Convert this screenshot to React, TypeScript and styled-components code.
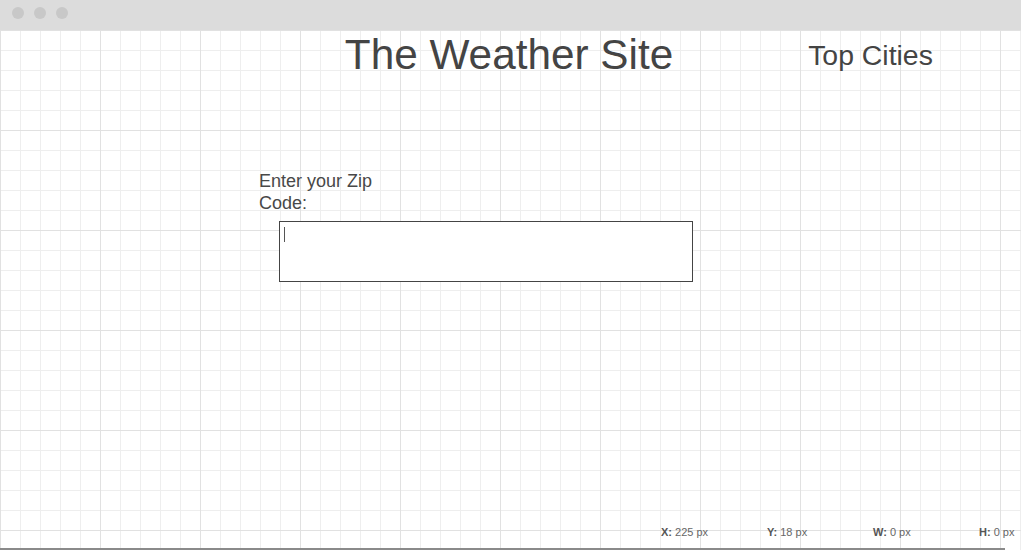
import React from "react";
import styled, { createGlobalStyle } from "styled-components";

const GlobalStyle = createGlobalStyle`
  html, body {
    margin: 0;
    padding: 0;
    background: #ffffff;
    overflow: hidden;
  }
  body {
    font-family: "Liberation Sans", Arial, sans-serif;
    color: #444444;
  }
  * { box-sizing: border-box; }
`;

const Window = styled.div`
  width: 1021px;
  height: 550px;
  display: flex;
  flex-direction: column;
  overflow: hidden;
`;

const TitleBar = styled.div`
  height: 30px;
  flex-shrink: 0;
  background: #dcdcdc;
  display: flex;
  align-items: flex-start;
  gap: 10px;
  padding: 7px 0 0 12px;
`;

const Dot = styled.span`
  width: 12px;
  height: 12px;
  border-radius: 50%;
  background: #c8c8c8;
`;

const Canvas = styled.div`
  flex: 1;
  display: flex;
  flex-direction: column;
  background-color: #ffffff;
  background-image:
    linear-gradient(to right, #e1e1e1 1px, transparent 1px),
    linear-gradient(to bottom, #e1e1e1 1px, transparent 1px),
    linear-gradient(to right, #eeeeee 1px, transparent 1px),
    linear-gradient(to bottom, #eeeeee 1px, transparent 1px);
  background-size: 100px 100px, 100px 100px, 20px 20px, 20px 20px;
  background-position: 0 0;
`;

const Header = styled.header`
  display: grid;
  grid-template-columns: 1fr auto 1fr;
  align-items: start;
  padding-top: 4px;
`;

const SiteTitle = styled.h1`
  grid-column: 2;
  margin: 0 0 0 -3px;
  font-size: 42.3px;
  line-height: 42px;
  font-weight: 400;
  color: #444444;
  white-space: nowrap;
`;

const SideNav = styled.nav`
  grid-column: 3;
  padding: 7px 0 0 135px;
`;

const SideTitle = styled.h2`
  margin: 0;
  font-size: 28.4px;
  line-height: 28px;
  font-weight: 400;
  color: #444444;
  white-space: nowrap;
`;

const ZipForm = styled.form`
  margin-top: 94px;
  padding-left: 259px;
  display: flex;
  flex-direction: column;
  align-items: flex-start;
  gap: 7px;
`;

const ZipLabel = styled.label`
  width: 120px;
  font-size: 18px;
  line-height: 22px;
  color: #484848;
`;

const InputWrap = styled.div`
  position: relative;
  margin-left: 20px;
`;

const ZipInput = styled.input`
  display: block;
  width: 414px;
  height: 61px;
  margin: 0;
  padding: 0 5px;
  border: 1px solid #444444;
  border-radius: 0;
  background: #ffffff;
  outline: none;
  caret-color: transparent;
  font-family: "Liberation Sans", Arial, sans-serif;
  font-size: 14px;
`;

const Caret = styled.span`
  position: absolute;
  left: 5px;
  top: 6px;
  width: 1px;
  height: 15px;
  background: #555555;
`;

const Footer = styled.footer`
  margin-top: auto;
  display: flex;
  flex-direction: column;
`;

const StatusRow = styled.div`
  display: flex;
  padding: 0 0 9px 661px;
`;

const StatusItem = styled.div`
  flex: 0 0 106px;
  font-size: 11px;
  line-height: 13px;
  color: #666666;
  white-space: nowrap;

  &:last-child {
    flex: 0 0 auto;
  }
`;

const StatusKey = styled.b`
  font-weight: 700;
  color: #555555;
`;

const BottomRule = styled.div`
  width: 1005px;
  height: 2px;
  background: #8a8a8a;
`;

const stats: [string, string][] = [
  ["X:", "225 px"],
  ["Y:", "18 px"],
  ["W:", "0 px"],
  ["H:", "0 px"],
];

export default function App() {
  return (
    <>
      <GlobalStyle />
      <Window>
        <TitleBar>
          <Dot />
          <Dot />
          <Dot />
        </TitleBar>
        <Canvas>
          <Header>
            <SiteTitle>The Weather Site</SiteTitle>
            <SideNav>
              <SideTitle>Top Cities</SideTitle>
            </SideNav>
          </Header>
          <ZipForm onSubmit={(e) => e.preventDefault()}>
            <ZipLabel htmlFor="zip">Enter your Zip Code:</ZipLabel>
            <InputWrap>
              <ZipInput id="zip" type="text" />
              <Caret />
            </InputWrap>
          </ZipForm>
          <Footer>
            <StatusRow>
              {stats.map(([k, v]) => (
                <StatusItem key={k}>
                  <StatusKey>{k}</StatusKey> {v}
                </StatusItem>
              ))}
            </StatusRow>
            <BottomRule />
          </Footer>
        </Canvas>
      </Window>
    </>
  );
}
